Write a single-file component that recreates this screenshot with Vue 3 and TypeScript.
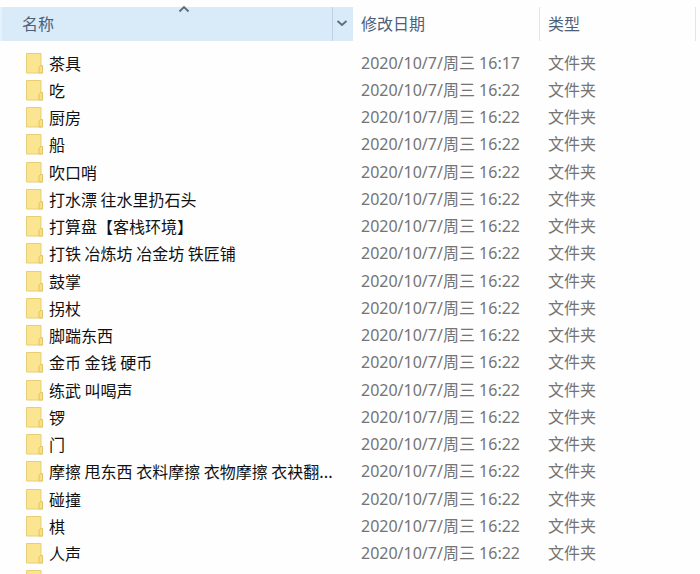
<script setup lang="ts">
interface Folder {
  name: string
  modified: string
  kind: string
}

const names: string[] = [
  '茶具', '吃', '厨房', '船', '吹口哨', '打水漂 往水里扔石头', '打算盘【客栈环境】',
  '打铁 冶炼坊 冶金坊 铁匠铺', '鼓掌', '拐杖', '脚踹东西', '金币 金钱 硬币', '练武 叫喝声',
  '锣', '门', '摩擦 甩东西 衣料摩擦 衣物摩擦 衣袂翻...', '碰撞', '棋', '人声',
]

const folders: Folder[] = names.map((name, i) => ({
  name,
  modified: i === 0 ? '2020/10/7/周三 16:17' : '2020/10/7/周三 16:22',
  kind: '文件夹',
}))

// The list continues below the window edge.
folders.push({ name: '', modified: '', kind: '' })
</script>

<template>
  <main class="explorer">
    <table class="files">
      <colgroup>
        <col class="col-name" />
        <col class="col-date" />
        <col />
      </colgroup>
      <thead>
        <tr>
          <th class="sorted" aria-sort="ascending">
            <div class="head">
              <button type="button" class="label name-label">
                名称
                <svg class="sort" width="12" height="8" viewBox="0 0 12 8" aria-hidden="true">
                  <path d="M1.5 6.500 6 2l4.500 4.500" />
                </svg>
              </button>
              <button type="button" class="filter" aria-label="筛选">
                <svg width="12" height="8" viewBox="0 0 12 8" aria-hidden="true">
                  <path d="M1.500 2 6 6l4.500-4" />
                </svg>
              </button>
            </div>
          </th>
          <th>
            <div class="head divided"><button type="button" class="label">修改日期</button></div>
          </th>
          <th>
            <div class="head divided last"><button type="button" class="label">类型</button></div>
          </th>
        </tr>
      </thead>
      <tbody>
        <tr v-for="(f, i) in folders" :key="i">
          <td>
            <div class="entry">
              <svg class="folder" width="17" height="22" viewBox="0 0 17 22" aria-hidden="true">
                <path class="back" d="M.5 1.500h14.500v12.500l1.500 1V21H.5z" />
                <path class="flap" d="M13 21v-5.500l1.500-2h2V21z" />
              </svg>
              <span class="name">{{ f.name }}</span>
            </div>
          </td>
          <td class="meta">{{ f.modified }}</td>
          <td class="meta">{{ f.kind }}</td>
        </tr>
      </tbody>
    </table>
  </main>
</template>

<style>
body {
  background: #fefefe;
}
</style>

<style scoped>
.explorer {
  height: 100vh;
  box-sizing: border-box;
  padding-top: 7px;
  overflow: hidden;
  font-family: "Noto Sans CJK SC", "Noto Sans", sans-serif;
  font-size: 16px;
  line-height: 24px;
}

.files {
  width: 100%;
  table-layout: fixed;
  border-collapse: collapse;
}

.col-name {
  width: 353px;
}

.col-date {
  width: 187px;
}

th,
td {
  padding: 0;
  text-align: left;
  font-weight: 400;
}

.head {
  display: flex;
  height: 34px;
}

.sorted {
  background: #d9eaf8;
}

.sorted .head {
  border-left: 2px solid #e6f2fb;
}

.divided {
  border-right: 1px solid #e3e5e8;
}

.last {
  margin-right: 4px;
}

button {
  margin: 0;
  border: 0;
  background: none;
  font: inherit;
  color: #4c607a;
}

.label {
  flex: 1;
  padding: 0 8px 2px;
  text-align: left;
}

.name-label {
  position: relative;
  padding-left: 20px;
}

.sort {
  position: absolute;
  top: -2px;
  left: 176px;
}

.filter {
  display: flex;
  align-items: center;
  justify-content: center;
  width: 21px;
  padding: 0 2px 2px 0;
  border-left: 1px solid #bfd3e5;
}

.sort path,
.filter path {
  fill: none;
  stroke: #5d6c7c;
  stroke-width: 1.8;
}

tbody::before {
  content: "";
  display: table-row;
  height: 8px;
}

tbody tr {
  height: 27px;
}

tbody tr:nth-child(4n) {
  height: 28px;
}

.entry {
  display: flex;
  align-items: center;
  gap: 6px;
  padding-left: 26px;
}

.folder {
  flex: none;
}

.back {
  fill: #fbe591;
  stroke: #e6cf76;
}

.flap {
  fill: #fae083;
  stroke: #e0c566;
}

.name {
  color: #111;
  white-space: nowrap;
}

.meta {
  padding-left: 8px;
  color: #747474;
  font-family: "Noto Sans", "Noto Sans CJK SC", sans-serif;
  white-space: nowrap;
}
</style>
